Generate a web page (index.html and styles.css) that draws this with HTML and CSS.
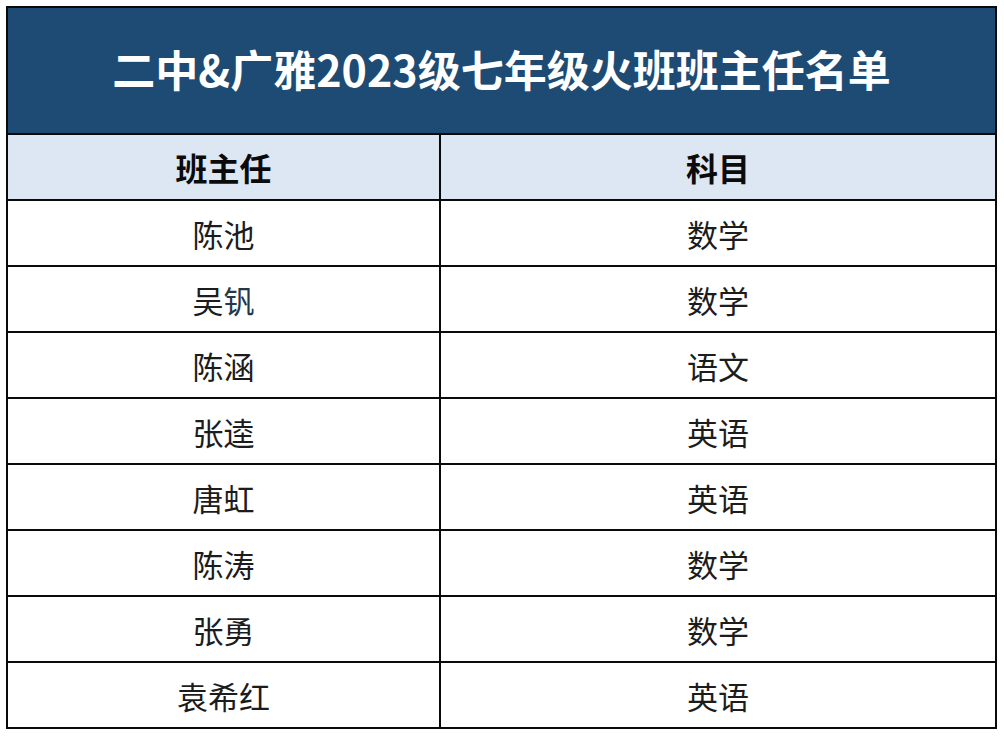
FILE: index.html
```html
<!DOCTYPE html>
<html lang="zh">
<head>
<meta charset="utf-8">
<title>二中&amp;广雅2023级七年级火班班主任名单</title>
<link rel="stylesheet" href="styles.css">
</head>
<body>
<table class="roster">
  <colgroup>
    <col class="col-name">
    <col class="col-subject">
  </colgroup>
  <thead>
    <tr class="title-row"><th colspan="2" class="title">二中&amp;广雅2023级七年级火班班主任名单</th></tr>
    <tr class="head-row"><th>班主任</th><th>科目</th></tr>
  </thead>
  <tbody>
    <tr><td>陈池</td><td>数学</td></tr>
    <tr><td>吴<span class="tint">钒</span></td><td>数学</td></tr>
    <tr><td>陈涵</td><td>语文</td></tr>
    <tr><td>张逵</td><td>英语</td></tr>
    <tr><td>唐虹</td><td>英语</td></tr>
    <tr><td>陈涛</td><td>数学</td></tr>
    <tr><td>张勇</td><td>数学</td></tr>
    <tr><td>袁希红</td><td>英语</td></tr>
  </tbody>
</table>
</body>
</html>
```
FILE: styles.css
```css
html, body {
  margin: 0;
  padding: 0;
  background: #ffffff;
}
body {
  padding: 6px 0 0 6px;
  font-family: "Noto Sans CJK SC", "Noto Sans", sans-serif;
}
.roster {
  border-collapse: collapse;
  width: 991px;
  table-layout: fixed;
  border: 2px solid #000;
}
.col-name {
  width: 433px;
}
.roster th,
.roster td {
  border: 2px solid #0a0a0a;
  padding: 0;
  text-align: center;
  vertical-align: middle;
}
.title-row th {
  height: 127px;
  background: #1e4b74;
  color: #ffffff;
  font-size: 43px;
  font-weight: 700;
  padding-bottom: 6px;
  box-sizing: border-box;
}
.head-row th {
  height: 64px;
  background: #dde7f3;
  color: #0b0b0b;
  font-size: 32px;
  font-weight: 700;
}
.roster td {
  height: 64px;
  font-size: 31px;
  font-weight: 400;
  color: #1c1c1c;
}
.tint {
  color: #22384c;
}
```
